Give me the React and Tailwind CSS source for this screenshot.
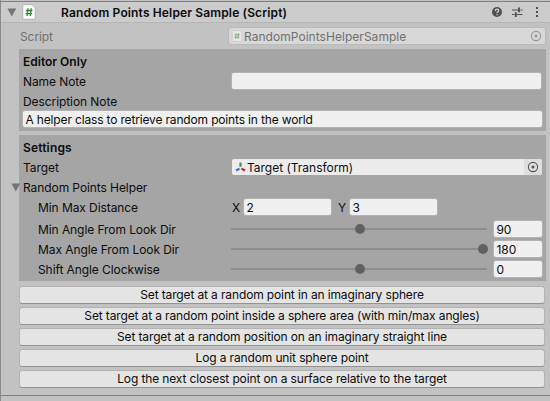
import React from "react";

const field =
  "h-4 rounded-[2px] bg-[#f0f0f0] shadow-[0_0_0_1px_#b3b3b3] flex items-center pl-[2.5px] pt-[2px] whitespace-nowrap";

function Foldout({ className = "" }) {
  return (
    <svg className={className} width="10" height="9" viewBox="0 0 10 9">
      <path d="M0.4 0.5H9.2L4.8 8.5Z" fill="#757575" />
    </svg>
  );
}

function ScriptIcon({ size, className = "" }) {
  return (
    <svg className={className} width={size} height={size} viewBox="0 0 16 16">
      <path d="M2.5 0.7H11.2L14.3 3.8V13.9Q14.3 15.3 12.9 15.3H3.1Q1.7 15.3 1.7 13.9V2.1Q1.7 0.7 2.5 0.7Z" fill="#fafafa" stroke="#a9a9a9" strokeWidth="0.8" />
      <path d="M7 4.2L6.1 12M10.2 4.2L9.3 12M4.9 6.5H11.4M4.6 9.6H11.1" stroke="#2f8737" strokeWidth="1.3" fill="none" />
    </svg>
  );
}

function Picker() {
  return (
    <svg width="12" height="12" viewBox="0 0 12 12">
      <circle cx="6" cy="6" r="4.6" fill="none" stroke="#555" strokeWidth="1.1" />
      <circle cx="6" cy="6" r="1.5" fill="#555" />
    </svg>
  );
}

function TransformIcon() {
  return (
    <svg width="12" height="12" viewBox="0 0 12 12" className="shrink-0">
      <path d="M5.5 5.8V1.5" stroke="#4f8a57" strokeWidth="2.2" />
      <path d="M4.6 7.6L1 9.5" stroke="#2d78cf" strokeWidth="2.2" />
      <path d="M6.4 7.6L10 9.5" stroke="#c9252d" strokeWidth="2.2" />
    </svg>
  );
}

function SliderRow({ label, value, at }) {
  return (
    <div className="flex h-4 items-center">
      <div className="w-[193px] shrink-0 pt-px">{label}</div>
      <div className="flex h-4 w-[257px] shrink-0 items-center">
        <div className="h-[2px] shrink-0 bg-[#8d8d8d]" style={{ width: at }} />
        <div className="h-[10px] w-[10px] shrink-0 rounded-full bg-[#616161]" />
        <div className="mr-px h-[2px] flex-1 bg-[#8d8d8d]" />
      </div>
      <div className={field + " ml-[6px] w-12 shrink-0"}>{value}</div>
    </div>
  );
}

const actions = [
  "Set target at a random point in an imaginary sphere",
  "Set target at a random point inside a sphere area (with min/max angles)",
  "Set target at a random position on an imaginary straight line",
  "Log a random unit sphere point",
  "Log the next closest point on a surface relative to the target",
];

export default function App() {
  return (
    <div className="h-[401px] w-[550px] overflow-hidden border-l border-[#8a8a8a] bg-[#c2c2c2] font-['Inter',sans-serif] text-[12px] leading-4 tracking-[-0.08px] text-[#0c0c0c]">
      <div className="h-[23px] border-b border-[#b5b5b5] bg-[#cbcbcb]">
        <div className="h-px bg-[#c2c2c2]" />
        <div className="h-px bg-[#7f7f7f]" />
        <div className="flex h-5 items-center">
          <Foldout className="ml-[6px]" />
          <ScriptIcon size="16" className="ml-[4px]" />
          <div className="ml-[24px] flex-1 pt-px font-semibold tracking-[0.14px]">Random Points Helper Sample (Script)</div>
          <svg width="54" height="16" viewBox="0 0 54 16" className="mr-[6px]">
            <circle cx="7" cy="8" r="5" fill="#505050" />
            <path d="M5.3 6.9Q5.3 5.2 7 5.2T8.7 6.7Q8.7 7.6 7.1 8.4V9M7.1 10V11.2" fill="none" stroke="#d5d5d5" strokeWidth="1.2" />
            <path d="M22 6H28.5M30.5 6H32.5M22 10.5H24.5M26.5 10.5H32.5" stroke="#505050" strokeWidth="1.1" />
            <path d="M29 3.5V8.3M25.8 8.3V13" stroke="#505050" strokeWidth="1.9" />
            <path d="M46 3H48V5H46ZM46 7H48V9H46ZM46 11H48V13H46Z" fill="#505050" />
          </svg>
        </div>
      </div>

      <div className="flex h-[26px] items-start pt-[5px] pl-[19px] text-[#707070]">
        <div className="w-[209px] pt-px">Script</div>
        <div className="flex h-4 w-[316px] items-center rounded-[2px] bg-[#d8d8d8] shadow-[0_0_0_1px_#bbbbbb]">
          <ScriptIcon size="12" className="ml-[2px] opacity-50" />
          <div className="ml-px flex-1 pt-px tracking-[0.04px]">RandomPointsHelperSample</div>
          <div className="mr-[3px] opacity-50"><Picker /></div>
        </div>
      </div>

      <section className="ml-[18px] h-[82px] w-[527px] bg-[#a5a5a5] pt-1 pl-1">
        <div className="h-5 pt-px font-semibold tracking-normal">Editor Only</div>
        <div className="flex h-5">
          <div className="w-[209px] pt-px">Name Note</div>
          <div className={field + " w-[309px]"} />
        </div>
        <div className="h-[18px] pt-px">Description Note</div>
        <div className={field + " w-[519px] tracking-[-0.16px]"}>A helper class to retrieve random points in the world</div>
      </section>

      <section className="mt-1 ml-[18px] h-[146px] w-[527px] bg-[#a5a5a5] pt-1 pl-1">
        <div className="h-5 pt-px font-semibold tracking-[0.15px]">Settings</div>
        <div className="flex h-5">
          <div className="w-[209px] pt-px">Target</div>
          <div className="flex h-4 w-[310px] items-center overflow-hidden rounded-[2px] bg-[#ececec] pl-[3px]">
            <TransformIcon />
            <div className="flex-1 pt-px tracking-[-0.02px]">Target (Transform)</div>
            <div className="flex h-4 w-[18px] items-center justify-center bg-[#dedede]"><Picker /></div>
          </div>
        </div>
        <div className="-ml-3 flex h-5 items-start">
          <Foldout className="mt-[4px] mr-[2px]" />
          <div className="pt-px">Random Points Helper</div>
        </div>
        <div className="flex h-[22px] items-start pl-[15px]">
          <div className="w-[194px] pt-px">Min Max Distance</div>
          <div className="w-[12px] pt-px">X</div>
          <div className={field + " w-[87px]"}>2</div>
          <div className="ml-[7px] w-[12px] pt-px">Y</div>
          <div className={field + " w-[87px]"}>3</div>
        </div>
        <div className="flex flex-col gap-1 pl-[15px]">
          <SliderRow label="Min Angle From Look Dir" value="90" at={124} />
          <SliderRow label="Max Angle From Look Dir" value="180" at={247} />
          <SliderRow label="Shift Angle Clockwise" value="0" at={124} />
        </div>
      </section>

      <div className="mt-[5px] ml-[18px] flex w-[526px] flex-col gap-[3px]">
        {actions.map((text) => (
          <button key={text} className="h-[18px] rounded-[3px] border border-[#b2b2b2] border-b-[#939393] bg-[#e4e4e4] text-center leading-4 tracking-[-0.13px]">
            {text}
          </button>
        ))}
      </div>
      <div className="mt-[7px] h-px bg-[#7f7f7f]" />
    </div>
  );
}
